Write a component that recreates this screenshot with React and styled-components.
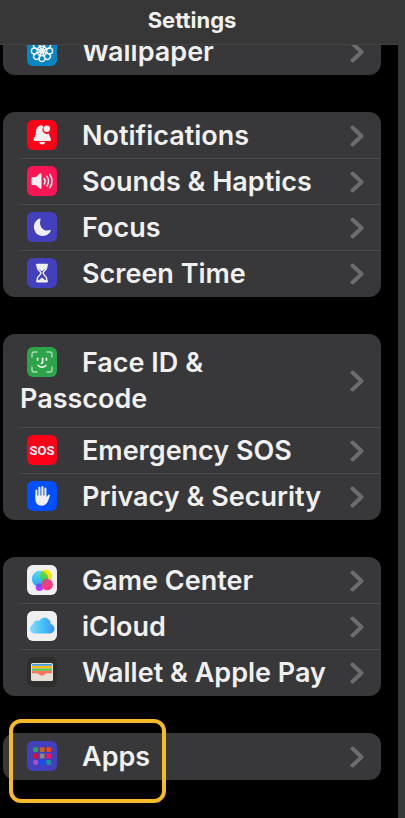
import React from "react";
import styled, { createGlobalStyle } from "styled-components";

const GlobalStyle = createGlobalStyle`
  * { box-sizing: border-box; }
  body {
    margin: 0;
    background: #000;
    color: #f0f0f1;
    font-family: Inter, "Liberation Sans", sans-serif;
  }
`;

const Screen = styled.div`
  min-height: 100vh;
  background: #000;
  border-right: 7px solid #343837;
`;

const Header = styled.header`
  position: relative;
  z-index: 1;
  display: flex;
  align-items: center;
  justify-content: center;
  height: 45px;
  padding: 0 14px 4px 0;
  background: #373737;
  border-bottom: 1px solid #424242;
`;

const Title = styled.h1`
  margin: 0;
  font-size: 22px;
  line-height: 28px;
  font-weight: 700;
`;

const Groups = styled.main`
  display: flex;
  flex-direction: column;
  gap: 37px;
  margin-top: -17px;
  padding: 0 17px 38px 3px;
`;

const Card = styled.ul`
  position: relative;
  margin: 0;
  padding: 0 0 1px 17px;
  list-style: none;
  background: #38383a;
  border-radius: 12px;
`;

const Item = styled.li`
  & + & > a { border-top: 1px solid #4b4b4e; }
`;

const Row = styled.a`
  display: flex;
  align-items: center;
  min-height: ${(p) => (p.$tall ? 93 : 46)}px;
  padding: 1px 17px 0 0;
  color: inherit;
  text-decoration: none;
`;

const Label = styled.span`
  flex: 1;
  min-width: 0;
  padding-right: 18px;
  font-size: 27px;
  line-height: 36px;
  font-weight: 600;
`;

const Icon = styled.svg`
  width: 30px;
  height: 30px;
  margin: 0 25px 0 7px;
  vertical-align: -5px;
  border-radius: 6px;
  background: ${(p) => p.$bg};
`;

const ChevronSvg = styled.svg`
  flex: none;
  width: 14px;
  height: 22px;
  fill: none;
  stroke: #6c6c6e;
  stroke-width: 4;
  stroke-linecap: round;
  stroke-linejoin: round;
`;

const Highlight = styled.li`
  position: absolute;
  top: -14px;
  left: 6px;
  width: 157px;
  height: 84px;
  border: 4px solid #f6ba25;
  border-radius: 12px;
  pointer-events: none;
`;

const W = "#f0f0f0";

const petals = [0, 45, 90, 135, 180, 225, 270, 315];

const icons = {
  wallpaper: {
    bg: "#0786c4",
    art: (
      <g fill="none" stroke={W} strokeWidth="1.4">
        {petals.map((a) => (
          <g key={a} transform={`rotate(${a} 15 15)`}>
            <circle cx="15" cy="7.4" r="3" />
            <path d="M15 15 L13.2 10.4 M15 15 L16.8 10.4" />
          </g>
        ))}
      </g>
    ),
  },
  notifications: {
    bg: "#ff0019",
    art: (
      <g fill={W}>
        <path d="M14.2 5.2c-3.9.7-5.2 3.6-5.4 7.2-.2 4-2.2 5.4-2.2 7.3 0 .9.6 1.3 1.4 1.3h14.6c.8 0 1.4-.4 1.4-1.3 0-1.9-1.7-3-2.1-6.1a4.6 4.6 0 0 1-5.7-6.7c-.2-.8-1-1.7-2-1.7z" />
        <circle cx="19.8" cy="8.8" r="3.3" />
        <path d="M12.2 22h6c-.3 1.7-1.4 2.6-3 2.6s-2.7-.9-3-2.6z" />
      </g>
    ),
  },
  sounds: {
    bg: "#fb1554",
    art: (
      <g>
        <path fill={W} d="M4.5 12.4c0-.7.4-1.1 1.1-1.1h3l4.3-3.7c.7-.6 1.6-.2 1.6.7v13.6c0 .9-.9 1.3-1.6.7L8.6 19H5.6c-.7 0-1.1-.4-1.1-1.1z" />
        <path fill="none" stroke={W} strokeWidth="1.5" strokeLinecap="round" d="M17.2 12.3c1.1 1.8 1.1 3.9 0 5.7M20 10.3c2 3.1 2 6.5 0 9.6M22.8 8.3c2.9 4.4 2.9 9.2 0 13.6" />
      </g>
    ),
  },
  focus: {
    bg: "#4240bd",
    art: (
      <path fill={W} d="M12.6 6.5C9.4 7.7 6.9 10.9 6.9 15c0 5 3.9 9 8.9 9 3.5 0 6.7-2 7.9-5.2.2-.6-.3-.9-.9-.7-6 1.9-11.4-3.2-9.3-10.7.2-.7-.3-1.1-.9-.9z" />
    ),
  },
  time: {
    bg: "#4240bd",
    art: (
      <g>
        <path fill="none" stroke={W} strokeWidth="1.5" strokeLinejoin="round" d="M10.3 7.2v2.1c0 3 3.6 3.7 3.6 5.8s-3.6 2.8-3.6 5.8v2.1h9.4v-2.1c0-3-3.6-3.7-3.6-5.8s3.6-2.8 3.6-5.8V7.2z" />
        <path fill="none" stroke={W} strokeWidth="2.2" strokeLinecap="round" d="M10.1 6.9h9.8M10.1 23.3h9.8" />
        <path fill={W} d="M11 7h8v2.7c-.4 1.5-2.6 2.4-3.4 3.3h-1.2c-.8-.9-3-1.8-3.4-3.3zM15 19.5l2.5 2v1h-5v-1z" />
      </g>
    ),
  },
  face: {
    bg: "#2ea44a",
    art: (
      <g fill="none" strokeLinecap="round">
        <path stroke="#a8dcb4" strokeWidth="1.4" d="M5 10V7.2C5 5.7 5.7 5 7.2 5H10M20 5h2.8c1.5 0 2.2.7 2.2 2.2V10M25 20v2.8c0 1.5-.7 2.2-2.2 2.2H20M10 25H7.2C5.7 25 5 24.3 5 22.8V20" />
        <path stroke={W} strokeWidth="1.7" d="M10.6 11.3v1.8M19.4 11.3v1.8M15.6 11.3v3.9c0 .8-.4 1.2-1.2 1.2M11.2 18.5c2.2 2.2 5.4 2.2 7.6 0" />
      </g>
    ),
  },
  sos: {
    bg: "#ff0019",
    art: (
      <text x="15" y="20" textAnchor="middle" fill={W} fontFamily="Roboto, sans-serif" fontSize="13" fontWeight="700">
        SOS
      </text>
    ),
  },
  privacy: {
    bg: "#0050ff",
    art: (
      <g fill="none" stroke={W} strokeLinecap="round">
        <path strokeWidth="2" d="M9.4 9.5V17M12.4 6.8V16M15.4 6V16M18.4 7.6V17" />
        <path fill={W} stroke="none" d="M8.4 14.5h11v2.3l1.6-2.7c.6-1 1.9-.6 1.9.5 0 .5-.4 1.2-.7 2.1-1.3 4.2-3 8-7.5 8-4.1 0-6.3-2.5-6.3-6.6z" />
      </g>
    ),
  },
  game: {
    bg: "#f0f0f0",
    art: (
      <g>
        <defs>
          <linearGradient id="gc-blue" x2="0" y2="1"><stop stopColor="#50dcfb" /><stop offset="1" stopColor="#2d9cf9" /></linearGradient>
          <linearGradient id="gc-yellow" x2="0" y2="1"><stop stopColor="#fff000" /><stop offset="1" stopColor="#ffc928" /></linearGradient>
          <linearGradient id="gc-green" x2="0" y2="1"><stop stopColor="#85df24" /><stop offset="1" stopColor="#22c879" /></linearGradient>
          <clipPath id="gc-left"><circle cx="13" cy="14" r="8.2" /></clipPath>
        </defs>
        <circle cx="12.5" cy="22.3" r="3.8" fill="#bd38ff" />
        <circle cx="19" cy="10.8" r="6.2" fill="url(#gc-yellow)" />
        <circle cx="13" cy="14" r="8.2" fill="url(#gc-blue)" />
        <circle cx="19" cy="10.8" r="6.2" fill="url(#gc-green)" clipPath="url(#gc-left)" />
        <circle cx="12.5" cy="22.3" r="3.8" fill="#6951f3" clipPath="url(#gc-left)" />
        <circle cx="20.2" cy="19.6" r="5.7" fill="#ff397f" />
        <circle cx="20.2" cy="19.6" r="5.7" fill="#d64a87" clipPath="url(#gc-left)" />
      </g>
    ),
  },
  cloud: {
    bg: "#f0f0f0",
    art: (
      <g>
        <defs>
          <linearGradient id="cloud-fill"><stop stopColor="#83dcfb" /><stop offset=".55" stopColor="#42bff8" /><stop offset="1" stopColor="#3f91f4" /></linearGradient>
        </defs>
        <path fill="url(#cloud-fill)" d="M8.5 22.6C5.2 22.6 3 20.5 3 17.8c0-2.3 1.3-4 3.3-4.6.1-3 3.3-4.6 5.7-3.1 1.1-2 3.1-3.3 5.5-3.3 3.4 0 6.2 2.6 6.3 6.3 2.3.6 3.7 2.4 3.7 4.6 0 2.8-2.3 4.9-5.1 4.9z" />
      </g>
    ),
  },
  wallet: {
    bg: "#2e2e2f",
    art: (
      <g>
        <rect x="4" y="6" width="22" height="18" rx="1.5" fill="#e5e0d3" />
        <path fill="#3f9edc" d="M5 8.7V8q0-1 1-1h18q1 0 1 1v.7z" />
        <path fill="#fdb91b" d="M5 9.1h20v2.2H5z" />
        <path fill="#5bc34b" d="M5 11.6h20v2.2H5z" />
        <path fill="#fb735f" d="M5 14h20v2.2h-5.5c-1.2 0-1.6 2.3-4.5 2.3s-3.3-2.3-4.5-2.3H5z" />
      </g>
    ),
  },
  apps: {
    bg: "#4240bd",
    art: (
      <g>
        {["#30a451", "#d8600a", "#f74700", "#ff0019", "#85858a", "#fb1554", "#a64dcb", "#0653ff", "#159791"].map((c, i) => (
          <rect key={c} x={6.2 + (i % 3) * 6.6} y={6.2 + Math.floor(i / 3) * 6.4} width="4.8" height="4.8" rx="1" fill={c} />
        ))}
      </g>
    ),
  },
};

const groups = [
  [["wallpaper", "Wallpaper"]],
  [["notifications", "Notifications"], ["sounds", "Sounds & Haptics"], ["focus", "Focus"], ["time", "Screen Time"]],
  [["face", "Face ID & Passcode", true], ["sos", "Emergency SOS"], ["privacy", "Privacy & Security"]],
  [["game", "Game Center"], ["cloud", "iCloud"], ["wallet", "Wallet & Apple Pay"]],
  [["apps", "Apps"]],
];

function SettingsRow({ id, label, tall }) {
  return (
    <Item>
      <Row href={`#${id}`} $tall={tall}>
        <Label>
          <Icon viewBox="0 0 30 30" $bg={icons[id].bg} aria-hidden="true">{icons[id].art}</Icon>
          {label}
        </Label>
        <ChevronSvg viewBox="0 0 14 22" aria-hidden="true">
          <path d="M2.5 2.5 11.5 11 2.5 19.5" />
        </ChevronSvg>
      </Row>
    </Item>
  );
}

export default function App() {
  return (
    <>
      <GlobalStyle />
      <Screen>
        <Header>
          <Title>Settings</Title>
        </Header>
        <Groups>
          {groups.map((rows) => (
            <Card key={rows[0][0]}>
              {rows.map(([id, label, tall]) => (
                <SettingsRow key={id} id={id} label={label} tall={tall} />
              ))}
              {rows[0][0] === "apps" && <Highlight aria-hidden="true" />}
            </Card>
          ))}
        </Groups>
      </Screen>
    </>
  );
}
